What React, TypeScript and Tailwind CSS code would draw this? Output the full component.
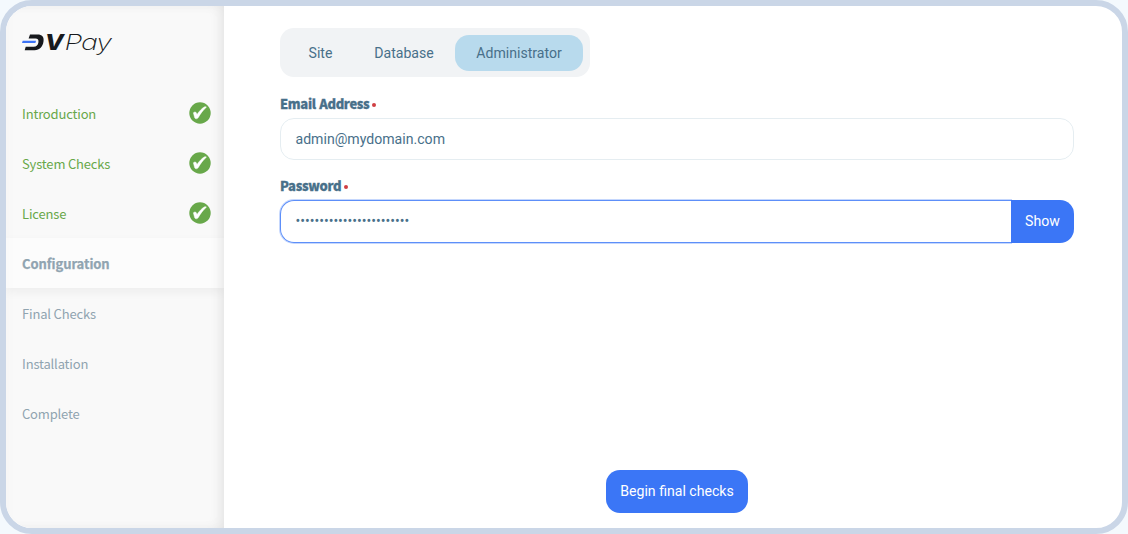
const steps = [
  { label: "Introduction", state: "done" },
  { label: "System Checks", state: "done" },
  { label: "License", state: "done" },
  { label: "Configuration", state: "active" },
  { label: "Final Checks", state: "todo" },
  { label: "Installation", state: "todo" },
  { label: "Complete", state: "todo" },
];

const stateClass: Record<string, string> = {
  done: "text-[#68a84a] tracking-[-0.17px]",
  active: "bg-[#fcfcfc] font-bold text-[#90a4b1] tracking-[-0.06px] [-webkit-text-stroke:0.25px_#90a4b1] shadow-[0_4px_10px_rgba(0,0,0,0.05)]",
  todo: "text-[#90a4b0] tracking-[-0.17px]",
};

function Logo() {
  return (
    <svg width="96" height="32" viewBox="0 0 96 32" className="overflow-visible" role="img" aria-label="DVPay">
      <path d="M8 2.5H15.5C20 2.5 22.3 5 21.5 9.6C20.7 15 17.8 18.2 12.5 18.2H2.7L3.7 14.8H11.6C14.5 14.8 16 13.3 16.4 10.6C16.8 7.7 16 6.4 13.4 6.4H6.6Z" fill="#17191d" />
      <path d="M6 7.8H14.8V12.2H5Z" fill="#f9f9f9" />
      <path d="M0.7 8.7H14L13.4 11.1H0Z" fill="#3d74f6" />
      <text x="22.8" y="18.2" fontSize="21.5" fontWeight="800" fontStyle="italic" fill="#17191d" textLength="19" lengthAdjust="spacingAndGlyphs" className="font-['Inter',sans-serif]">V</text>
      <text x="42.5" y="18.2" fontSize="21.5" fontWeight="200" fontStyle="italic" fill="#17191d" letterSpacing="-0.8" textLength="46.5" lengthAdjust="spacingAndGlyphs" className="font-['Inter',sans-serif]">Pay</text>
    </svg>
  );
}

function Check() {
  return (
    <svg className="h-[22px] w-[22px]" viewBox="0 0 22 22" aria-hidden="true">
      <circle cx="11" cy="11" r="10.7" fill="#68a84a" />
      <path d="M4.4 10.8C5.4 9.8 6.7 9.7 7.2 10.7L8 12.6C10 9.3 12.8 6.4 15.4 4.9C16.2 4.5 17.4 4.7 17.4 5.2C14.1 8 11.2 12 9.3 15.6C8.5 17 6.2 17.2 5.7 15.8Z" fill="#fff" stroke="#fff" strokeWidth="0.5" strokeLinejoin="round" />
    </svg>
  );
}

function Label({ text }: { text: string }) {
  return (
    <div className="flex h-5 items-center gap-[3px] font-['Noto_Sans_CJK_SC',sans-serif] text-[13px] leading-5 font-black text-[#48708a]">
      <span className="tracking-[-0.33px] [word-spacing:0.8px] [-webkit-text-stroke:0.3px_#48708a]">{text}</span>
      <span className="mt-0.5 h-1 w-1 rounded-full bg-[#d03f43]" />
    </div>
  );
}

export default function App() {
  return (
    <div className="h-[534px] w-[1128px] bg-[#f4f9fd] font-['Roboto',sans-serif] text-[14.1px]">
      <div className="flex h-full overflow-hidden rounded-[32px] border-6 border-[#cad6e7] bg-white">
        <aside className="relative w-[218px] shrink-0 overflow-hidden bg-[#f9f9f9]">
          <div className="h-[82px] pt-[25.5px] pl-4">
            <Logo />
          </div>
          <nav className="font-['Noto_Sans_CJK_SC',sans-serif] text-[13px]">
            {steps.map((s) => (
              <div key={s.label} className={`flex h-[50px] items-center justify-between pr-[13.5px] pl-4 ${stateClass[s.state]}`}>
                <span className="pt-px">{s.label}</span>
                {s.state === "done" && <Check />}
              </div>
            ))}
          </nav>
          <div className="pointer-events-none absolute inset-0 shadow-[inset_-7px_0_14px_-5px_rgba(0,0,0,0.09),inset_0_0_14px_rgba(0,0,0,0.025)]" />
        </aside>
        <main className="flex flex-1 flex-col pt-[22px] pr-12 pl-14">
          <div className="flex h-[49px] w-[310px] items-center rounded-[14px] bg-[#f1f3f5] px-[7px] text-[#48708a]">
            <div className="flex h-9 w-[66px] items-center justify-center pt-0.5 pl-px">Site</div>
            <div className="flex h-9 w-[102px] items-center justify-center pt-0.5">Database</div>
            <div className="flex h-9 w-32 items-center justify-center rounded-[14px] bg-[#b8daed] pt-0.5">Administrator</div>
          </div>
          <div className="mt-[17px]">
            <Label text="Email Address" />
          </div>
          <div className="mt-1 flex h-[42px] w-[794px] items-center rounded-[14px] border border-[#e5edf1] px-[14.5px] pt-px text-[#48708a]">
            admin@mydomain.com
          </div>
          <div className="mt-4">
            <Label text="Password" />
          </div>
          <div className="mt-1 flex h-[43px] w-[794px]">
            <div className="flex flex-1 items-center rounded-l-[14px] border border-r-0 border-[#5d8ff9] px-[14.5px] text-[#48708a] shadow-[0_0_0_1px_#c5d7fd]">
              <span className="tracking-[-0.02px]">••••••••••••••••••••••••</span>
            </div>
            <button className="relative w-[63px] rounded-r-[14px] bg-[#3b76f6] text-white">Show</button>
          </div>
          <button className="mt-[227px] ml-[326px] h-[43px] w-[142px] rounded-[14px] bg-[#3b76f6] text-white">
            Begin final checks
          </button>
        </main>
      </div>
    </div>
  );
}
